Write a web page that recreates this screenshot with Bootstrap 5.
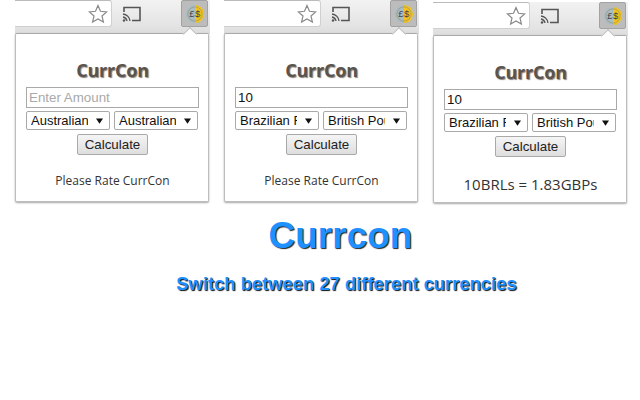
<!doctype html>
<html lang="en">
<head>
  <meta charset="utf-8">
  <meta name="viewport" content="width=device-width, initial-scale=1">
  <title>Currcon</title>
  <link href="https://cdn.jsdelivr.net/npm/bootstrap@5.3.5/dist/css/bootstrap.min.css" rel="stylesheet">
  <style>
    body { background: #fff; width: 640px; height: 400px; overflow: hidden; font-family: "Liberation Sans", Arial, sans-serif; }
    .shots { padding-left: 15px; gap: 14px; }
    .shot { width: 195px; }
    .shot-low { margin-top: 2px; height: 201px; }
    .toolbar { height: 34px; background: linear-gradient(#f2f2f2, #e4e4e4 75%, #dcdcdc); }
    .urlbox { width: 97px; height: 27px; background: #fff; border: 1px solid #d0d0d0; border-left: 0; border-top-color: #bbb; border-radius: 0 3px 3px 0; padding-right: 3px; }
    .cast { margin-left: 10px; }
    .extbtn { width: 27px; height: 27px; margin-left: auto; margin-right: 2px; background: #bcbcbc; border: 1px solid #a2a2a2; border-radius: 2px; }
    .popup { width: 194px; height: 169px; background: #fff; border: 1px solid #bdbdbd; border-top-color: #aaa; border-radius: 2px; box-shadow: 0 1px 2px rgba(0,0,0,.35); padding: 24px 9px 0 10px; margin-top: -1px; }
    .shot-low .popup { height: 168px; }
    .notch { width: 10px; height: 10px; background: #fff; border-left: 1px solid #bbb; border-top: 1px solid #bbb; transform: rotate(45deg); top: -5px; right: 13px; }
    .apptitle { font-family: "Open Sans", sans-serif; font-size: 18px; line-height: 24px; font-weight: 700; color: #59544f; text-shadow: 1px 1px 1px #8a8078; margin: 0 0 5px; letter-spacing: -.2px; }
    .amount.form-control { height: 21px; padding: 0 2px; font-size: 13.33px; line-height: 19px; border: 1px solid #a9a9a9; border-radius: 0; color: #111; font-family: "Liberation Sans", sans-serif; min-height: 0; }
    .amount.form-control::placeholder { color: #a9a9a9; opacity: 1; }
    .pick.form-select { width: 84px; height: 19px; padding: 0 21px 0 4px; font-size: 13px; line-height: 17px; border: 1px solid #a9a9a9; border-radius: 2px; color: #111; min-height: 0; background-position: right 6px center; background-size: 7px 6px; background-image: url("data:image/svg+xml,%3csvg xmlns='http://www.w3.org/2000/svg' viewBox='0 0 8 6'%3e%3cpath d='M0 0h8L4 6z' fill='%23111'/%3e%3c/svg%3e"); }
    .selects { margin-top: 3px; gap: 4px; }
    .calc.btn { width: 71px; height: 21px; margin-top: 4px; padding: 0; font-size: 13.33px; line-height: 19px; color: #222; background: linear-gradient(#f5f5f5, #dedede); border: 1px solid #a9a9a9; border-radius: 2px; }
    .rate { margin-top: 18px; font-family: "Open Sans", sans-serif; font-size: 12px; line-height: 16px; color: #333; }
    .result { margin-top: 18px; font-size: 15px; line-height: 18px; font-family: "Open Sans", sans-serif; color: #333; }
    .bigtitle { font-size: 37px; line-height: 42px; font-weight: 700; color: #1e90ff; text-shadow: 1px 1px 1px #222; margin: 12px 0 0; padding-left: 41px; }
    .subtitle { font-size: 18.4px; line-height: 22px; font-weight: 700; color: #1e90ff; text-shadow: 1px 1px 1px #111; margin: 16px 0 0; padding-left: 53px; }
    .cointext { font-family: "Liberation Sans", sans-serif; font-size: 10px; font-weight: 400; fill: #444; letter-spacing: .6px; }
  </style>
</head>
<body>
  <div class="d-flex shots" id="shots"></div>
  <h1 class="bigtitle text-center">Currcon</h1>
  <h2 class="subtitle text-center">Switch between 27 different currencies</h2>

  <script>
    const shots = [
      { amount: '', from: 'Australian Dollar', to: 'Australian Dollar', foot: '<div class="rate text-center">Please Rate CurrCon</div>' },
      { amount: '10', from: 'Brazilian Real', to: 'British Pound', foot: '<div class="rate text-center">Please Rate CurrCon</div>' },
      { amount: '10', from: 'Brazilian Real', to: 'British Pound', foot: '<div class="result text-center">10BRLs = 1.83GBPs</div>', low: true }
    ];

    const toolbar = `
      <div class="toolbar d-flex align-items-start">
        <div class="urlbox d-flex align-items-center justify-content-end">
          <svg width="20" height="20" viewBox="0 0 20 20"><path d="M10 1.5l2.5 5.8 6.2.6-4.7 4.1 1.4 6.1L10 15l-5.4 3.1L6 12 1.3 7.9l6.2-.6z" fill="#fff" stroke="#8a8a8a" stroke-width="1.2"/></svg>
        </div>
        <svg class="cast mt-1" width="20" height="20" viewBox="0 0 20 20" fill="none" stroke="#555"><path d="M2 8V3.5h16v13h-8" stroke-width="1.6"/><path d="M1 10a8 8 0 0 1 7 7M1 13a5 5 0 0 1 4 4" stroke-width="1.3"/><circle cx="2" cy="16.5" r="1.2" fill="#555" stroke="none"/></svg>
        <div class="extbtn d-flex align-items-center justify-content-center">
          <svg width="20" height="20" viewBox="0 0 21 21">
            <circle cx="10.5" cy="10.5" r="9.5" fill="#a9bcc4"/>
            <path d="M10.5 1a9.5 9.5 0 0 1 0 19z" fill="#f4c21f"/>
            <circle cx="10.5" cy="10.5" r="7.5" fill="none" stroke="#8b8b6a" stroke-width=".6"/>
            <text class="cointext" x="10.5" y="14" text-anchor="middle">£$</text>
          </svg>
        </div>
      </div>`;

    document.getElementById('shots').innerHTML = shots.map(s => `
      <div class="shot ${s.low ? 'shot-low' : ''}">
        ${toolbar}
        <div class="popup position-relative">
          <div class="notch position-absolute"></div>
          <div class="apptitle text-center">CurrCon</div>
          <input type="text" class="form-control amount" placeholder="Enter Amount" value="${s.amount}">
          <div class="d-flex selects">
            <select class="form-select pick"><option>${s.from}</option></select>
            <select class="form-select pick"><option>${s.to}</option></select>
          </div>
          <div class="text-center"><button type="button" class="btn calc">Calculate</button></div>
          ${s.foot}
        </div>
      </div>`).join('');
  </script>
  <script src="https://cdn.jsdelivr.net/npm/bootstrap@5.3.5/dist/js/bootstrap.bundle.min.js"></script>
</body>
</html>
